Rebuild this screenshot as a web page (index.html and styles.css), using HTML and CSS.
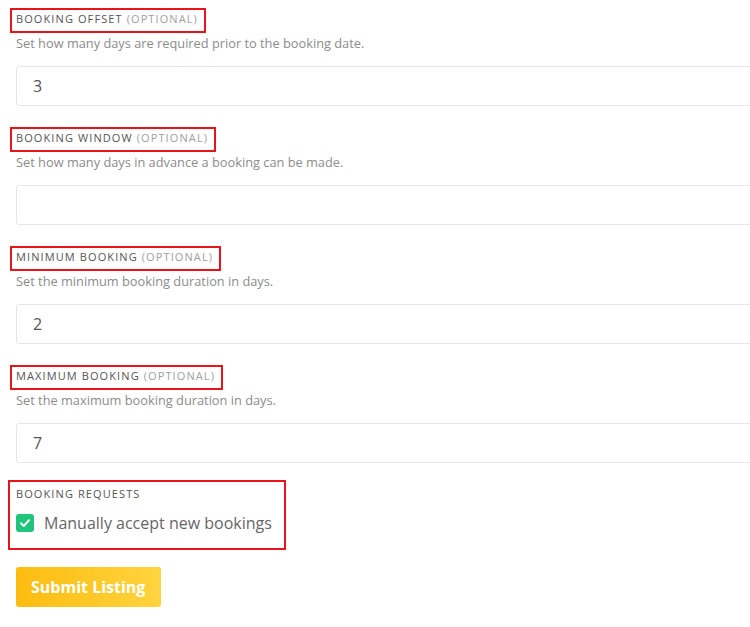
FILE: index.html
```html
<!DOCTYPE html>
<html lang="en">
<head>
    <meta charset="UTF-8">
    <meta name="viewport" content="width=device-width, initial-scale=1.0">
    <title>Booking Settings</title>
    <link rel="stylesheet" href="styles.css">
</head>
<body>
    <form class="listing-form">
        <!-- Booking offset -->
        <div class="field">
            <label class="field-label marked">Booking Offset <span>(optional)</span></label>
            <p class="field-desc">Set how many days are required prior to the booking date.</p>
            <input class="field-input" type="text" value="3">
        </div>

        <!-- Booking window -->
        <div class="field">
            <label class="field-label marked">Booking Window <span>(optional)</span></label>
            <p class="field-desc">Set how many days in advance a booking can be made.</p>
            <input class="field-input" type="text" value="">
        </div>

        <!-- Minimum booking -->
        <div class="field">
            <label class="field-label marked">Minimum Booking <span>(optional)</span></label>
            <p class="field-desc">Set the minimum booking duration in days.</p>
            <input class="field-input" type="text" value="2">
        </div>

        <!-- Maximum booking -->
        <div class="field">
            <label class="field-label marked">Maximum Booking <span>(optional)</span></label>
            <p class="field-desc">Set the maximum booking duration in days.</p>
            <input class="field-input" type="text" value="7">
        </div>

        <!-- Booking requests -->
        <div class="requests marked">
            <div class="field-label">Booking Requests</div>
            <label class="check-row">
                <span class="check-box">
                    <svg width="12" height="12" viewBox="0 0 12 12"><path d="M2 6.3 L4.8 9 L10 3.2" fill="none" stroke="#fff" stroke-width="2" stroke-linecap="round" stroke-linejoin="round"/></svg>
                </span>
                Manually accept new bookings
            </label>
        </div>

        <button type="button" class="submit-btn">Submit Listing</button>
    </form>
</body>
</html>
```

FILE: styles.css
```css
html, body {
    overflow: hidden;
}

body {
    margin: 0;
    padding: 6px 0 0 16px;
    font-family: 'Open Sans', 'Liberation Sans', sans-serif;
    background: #fff;
    color: #666;
}

.listing-form {
    width: 800px;
}

/* red annotation frames */
.marked {
    border: 2px solid #e8141b;
}

.field {
    margin-bottom: 19px;
}

.field-label {
    display: block;
    font-size: 11px;
    line-height: 15px;
    letter-spacing: 1.1px;
    text-transform: uppercase;
    color: #555;
}

.field-label span {
    color: #a0a0a0;
}

label.field-label.marked {
    display: inline-block;
    margin-left: -6px;
    padding: 1px 6px 5px 4px;
}

.field-desc {
    margin: 0 0 13px;
    font-size: 12.8px;
    line-height: 20px;
    color: #8c8c8c;
}

.field-input {
    display: block;
    box-sizing: border-box;
    width: 100%;
    height: 40px;
    padding: 0 16px;
    border: 1px solid #e6e6e6;
    border-radius: 3px;
    font-family: inherit;
    font-size: 16px;
    color: #555;
    background: #fff;
    outline: none;
}

.requests {
    display: inline-block;
    margin: -2px 0 0 -8px;
    padding: 4px 12px 13px 6px;
}

.check-row {
    display: flex;
    align-items: center;
    gap: 10px;
    margin-top: 10px;
    font-size: 16px;
    line-height: 24px;
    color: #666;
}

.check-box {
    display: flex;
    align-items: center;
    justify-content: center;
    width: 18px;
    height: 18px;
    border-radius: 3px;
    background: #20c47b;
}

.submit-btn {
    display: block;
    margin-top: 17px;
    width: 145px;
    height: 40px;
    padding: 0 15px;
    border: none;
    border-radius: 3px;
    background: linear-gradient(to right, #fcbc0f, #ffd43e);
    color: #fff;
    font-family: inherit;
    font-size: 16px;
    font-weight: 700;
    text-align: left;
    cursor: pointer;
}
```
